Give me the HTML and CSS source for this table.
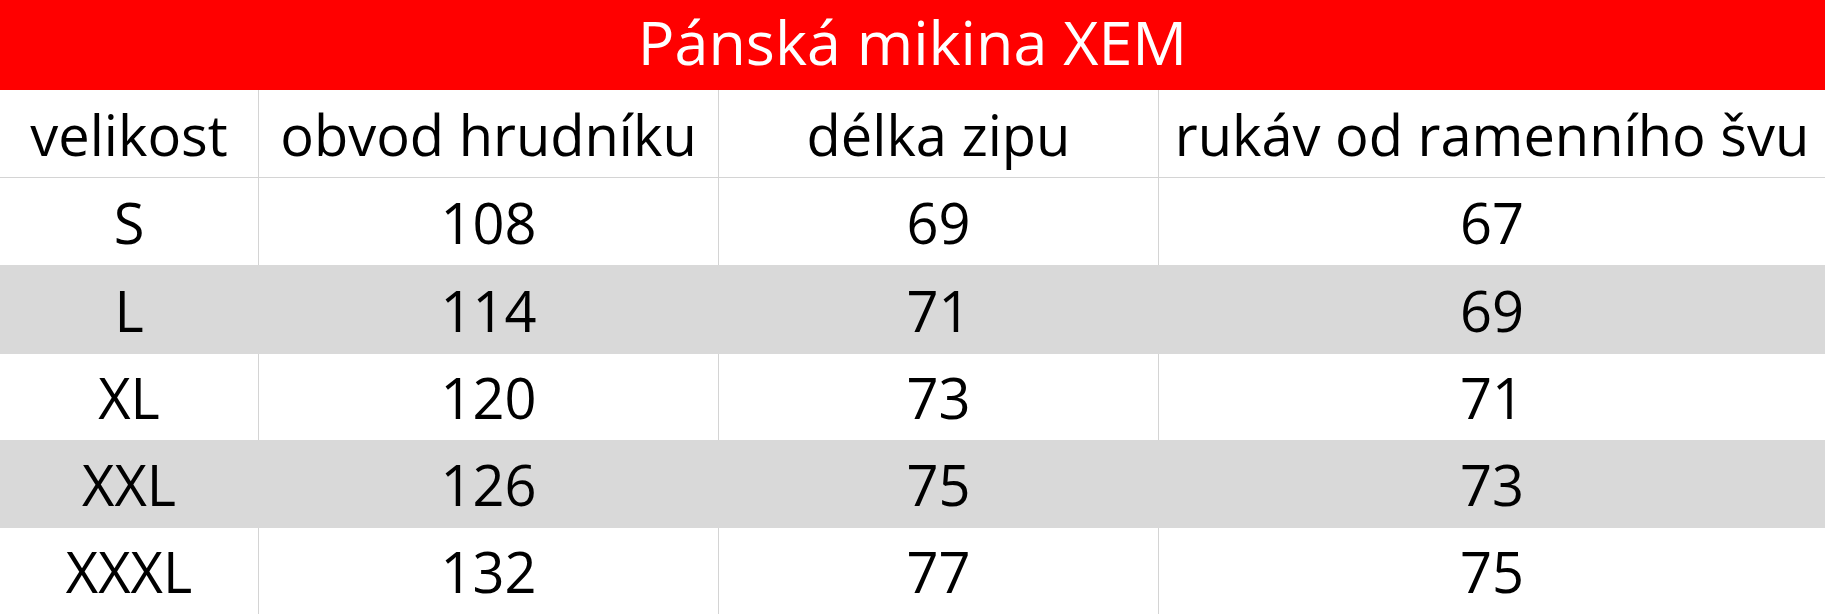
FILE: index.html
```html
<!DOCTYPE html>
<html lang="cs">
<head>
<meta charset="utf-8">
<title>Pánská mikina XEM</title>
<link rel="stylesheet" href="styles.css">
</head>
<body>
<div class="sheet">
  <div class="title">Pánská mikina XEM</div>
  <div class="row head">
    <div class="cell">velikost</div>
    <div class="cell">obvod hrudníku</div>
    <div class="cell">délka zipu</div>
    <div class="cell">rukáv od ramenního švu</div>
  </div>
  <div class="row r1">
    <div class="cell">S</div>
    <div class="cell">108</div>
    <div class="cell">69</div>
    <div class="cell">67</div>
  </div>
  <div class="row r2 shade">
    <div class="cell">L</div>
    <div class="cell">114</div>
    <div class="cell">71</div>
    <div class="cell">69</div>
  </div>
  <div class="row r3">
    <div class="cell">XL</div>
    <div class="cell">120</div>
    <div class="cell">73</div>
    <div class="cell">71</div>
  </div>
  <div class="row r4 shade">
    <div class="cell">XXL</div>
    <div class="cell">126</div>
    <div class="cell">75</div>
    <div class="cell">73</div>
  </div>
  <div class="row r5">
    <div class="cell">XXXL</div>
    <div class="cell">132</div>
    <div class="cell">77</div>
    <div class="cell">75</div>
  </div>
</div>
</body>
</html>
```
FILE: styles.css
```css
html, body {
  margin: 0;
  padding: 0;
  background: #ffffff;
  overflow: hidden;
}

.sheet {
  width: 1825px;
  height: 614px;
  display: flex;
  flex-direction: column;
  font-family: "Open Sans", "Noto Sans", sans-serif;
  color: #000000;
}

.title {
  height: 90px;
  box-sizing: border-box;
  padding-bottom: 8px;
  background: #ff0000;
  color: #ffffff;
  font-size: 61px;
  display: flex;
  align-items: center;
  justify-content: center;
  white-space: nowrap;
}

.row {
  display: grid;
  grid-template-columns: 259px 460px 440px 666px;
  font-size: 56px;
}

.head { height: 88px; border-bottom: 1px solid #d4d4d4; box-sizing: border-box; }
.r1 { height: 87px; }
.r2 { height: 89px; }
.r3 { height: 86px; }
.r4 { height: 88px; }
.r5 { height: 86px; }

.cell {
  display: flex;
  align-items: center;
  justify-content: center;
  white-space: nowrap;
  box-sizing: border-box;
  line-height: 1;
}

.cell:not(:last-child) {
  border-right: 1px solid #d4d4d4;
}

.shade {
  background: #d9d9d9;
}

.shade .cell {
  border-right-color: #d9d9d9;
}
```
